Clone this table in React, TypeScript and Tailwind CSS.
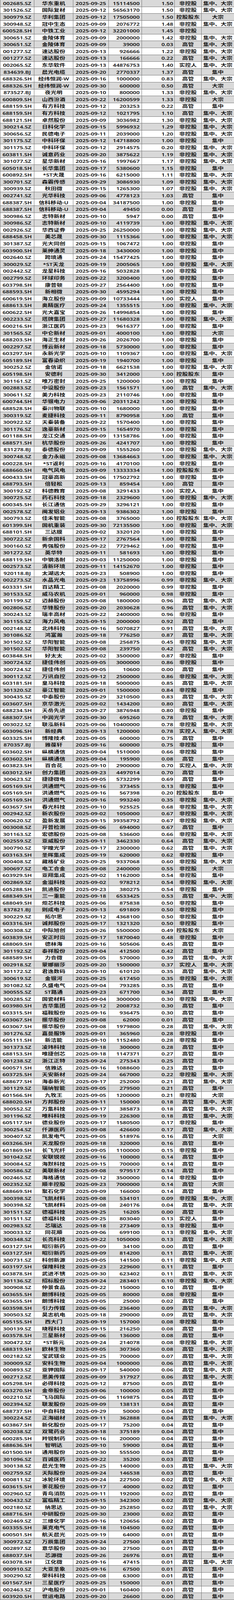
import React from "react";

// 减持明细表：代码 | 名称 | 日期 | 股数 | 比例 | 身份 | 方式
const RAW = `
002685.SZ 华东重机 25 15114500 1.50 非控股 集中、大宗
301526.SZ 国际复材 12 56563170 1.50 非控股 集中、大宗
300979.SZ 华利集团 12 17505000 1.50 控股股东 大宗
300948.SZ 冠中生态 09 2076772 1.48 非控股 集中、大宗
600528.SH 中铁工业 12 32201000 1.45 非控股 -
300651.SZ 金陵体育 09 2000000 1.42 非控股 集中、大宗
300651.SZ 金陵体育 09 39000 0.03 高管 集中、大宗
001277.SZ 速达股份 13 926666 1.22 非控股 集中、大宗
001277.SZ 速达股份 13 166666 0.22 高管 集中、大宗
002065.SZ 东华软件 13 44876753 1.40 实控人 集中、大宗
834639.BJ 晨光电缆 20 2770337 1.37 高管 集中
688326.SH 经纬恒润-W 16 1000000 0.83 高管 集中、大宗
688326.SH 经纬恒润-W 30 600000 0.50 高管 大宗
873527.BJ 夜光明 10 800000 1.33 非控股 集中、大宗
600809.SH 山西汾酒 22 16200599 1.33 非控股 大宗
688159.SH 有方科技 12 203253 0.22 高管 集中
688159.SH 有方科技 12 1021795 1.10 高管 集中、大宗
688121.SH 卓然股份 09 3036982 1.30 非控股 集中、大宗
300214.SZ 日科化学 15 5996932 1.29 非控股 集中、大宗
300656.SZ 民德电子 11 2039000 1.20 非控股 集中、大宗
301175.SZ 中科环保 12 14718800 1.00 非控股 集中
301175.SZ 中科环保 12 2914575 0.20 非控股 集中、大宗
603811.SH 诚意药业 20 3875622 1.19 非控股 集中、大宗
301077.SZ 星华新材 16 1997667 1.17 非控股 集中、大宗
605018.SH 长华集团 17 5380600 1.15 非控股 集中
600892.SH *ST大晟 16 6215000 1.11 非控股 集中、大宗
300701.SZ 森霸传感 29 3086930 1.09 非控股 集中、大宗
300939.SZ 秋田微 15 1265300 1.07 非控股 集中、大宗
002741.SZ 光华科技 06 4778123 1.03 高管 集中
688387.SH 信科移动-U 04 34187500 1.00 非控股 集中
688387.SH 信科移动-U 04 49450 0.00 高管 集中
300986.SZ 志特新材 10 5947 0.00 高管 集中
300986.SZ 志特新材 10 4119739 1.00 非控股 集中、大宗
002926.SZ 华西证券 25 26250000 1.00 非控股 集中、大宗
688458.SH 美芯晟 30 1115366 1.00 非控股 集中、大宗
301387.SZ 光大同创 15 1067472 1.00 非控股 集中
603900.SH 莱绅通灵 18 3430000 1.00 非控股 集中
002640.SZ 跨境通 24 15477425 1.00 非控股 集中
300029.SZ *ST天龙 19 2005065 1.00 非控股 集中、大宗
002442.SZ 龙星科技 16 5032828 1.00 非控股 集中
002799.SZ 环球印务 22 3200400 1.00 非控股 集中
603798.SH 康普顿 27 2564400 1.00 非控股 集中
688593.SH 新相微 30 4595294 1.00 非控股 集中
600619.SH 海立股份 09 10733444 1.00 实控人 集中
688613.SH 奥精医疗 24 1355515 1.00 非控股 集中、大宗
600622.SH 光大嘉宝 26 14996854 1.00 非控股 集中
002233.SZ 塔牌集团 27 11680328 1.00 非控股 集中、大宗
600216.SH 浙江医药 23 9616377 1.00 非控股 集中
301565.SZ 中仑新材 01 4000100 1.00 非控股 大宗
688203.SH 海正生材 26 2026700 1.00 非控股 集中
002297.SZ 博云新材 18 5730000 1.00 非控股 集中
603297.SH 永新光学 10 1109367 1.00 非控股 集中、大宗
605189.SH 富春染织 19 1940700 1.00 非控股 集中
300252.SZ 金信诺 18 6621538 1.00 非控股 集中、大宗
605198.SH 安德利 30 3412000 1.00 控股股东 集中
301161.SZ 唯万密封 25 1200000 1.00 非控股 集中
002883.SZ 中设股份 23 1561571 1.00 高管 集中、大宗
300611.SZ 美力科技 23 2110746 1.00 非控股 集中
600744.SH 华银电力 06 20311242 1.00 非控股 集中
688528.SH 秦川物联 10 1680000 1.00 非控股 集中
300319.SZ 麦捷科技 11 8790958 1.00 高管 集中
300922.SZ 天秦装备 22 1570400 1.00 非控股 集中
301176.SZ 逸豪新材 15 1654970 1.00 非控股 集中
601188.SH 龙江交通 09 13158786 1.00 非控股 集中
688571.SH 杭华股份 26 4241707 1.00 非控股 集中
831278.BJ 泰德股份 09 1555260 1.00 非控股 集中、大宗
300748.SZ 金力永磁 08 13684663 1.00 非控股 集中、大宗
600228.SH *ST返利 16 4170100 1.00 非控股 集中
688660.SH 电气风电 09 13333334 1.00 控股股东 集中
600433.SH 冠豪高新 06 17502792 1.00 非控股 集中
688793.SH 倍轻松 13 859454 1.00 高管 集中
300192.SZ 科德教育 08 3291433 1.00 实控人 集中
300725.SZ 药石科技 18 2329600 1.00 非控股 集中、大宗
600345.SH 长江通信 29 3296121 1.00 非控股 集中
002578.SZ 闽发铝业 13 9386302 1.00 非控股 集中
300793.SZ 佳禾智能 08 3765000 1.00 控股股东 集中、大宗
601399.SH 国机重装 30 72135500 1.00 非控股 集中、大宗
688101.SH 三达膜 02 3320120 1.00 非控股 集中
300722.SZ 新余国科 17 2767564 1.00 非控股 集中
300160.SZ 秀强股份 22 7729462 1.00 非控股 集中
301272.SZ 英华特 11 581693 1.00 非控股 集中
688119.SH 中钢洛耐 03 11250000 1.00 非控股 集中
002573.SZ 清新环境 11 14152670 1.00 非控股 集中
920118.BJ 太湖远大 23 508900 1.00 非控股 集中
002273.SZ 水晶光电 23 13758996 0.99 非控股 集中、大宗
603331.SH 百达精工 08 2020000 0.99 非控股 集中
301533.SZ 威马农机 01 960000 0.98 非控股 集中
301199.SZ 迈赫股份 08 1800000 0.96 高管 集中、大宗
002806.SZ 华锋股份 20 2030628 0.96 高管 集中、大宗
300243.SZ 瑞丰高材 22 2400000 0.96 非控股 集中
301155.SZ 海力风电 15 2000000 0.92 高管 集中
002148.SZ 北纬科技 16 5070827 0.91 高管 集中、大宗
301086.SZ 鸿富瀚 18 776250 0.87 高管 集中、大宗
301502.SZ 华阳智能 08 256875 0.45 非控股 集中、大宗
301502.SZ 华阳智能 08 239750 0.42 高管 集中、大宗
603848.SH 好太太 02 3500000 0.87 非控股 集中
300724.SZ 捷佳伟创 05 3000000 0.86 非控股 集中
300724.SZ 捷佳伟创 05 10600 0.00 高管 集中
300112.SZ 万讯自控 12 2500000 0.86 非控股 集中、大宗
603181.SH 皇马科技 18 5000000 0.85 高管 集中、大宗
301320.SZ 豪江智能 01 1500000 0.84 非控股 集中
300435.SZ 中泰股份 29 3210500 0.83 高管 集中、大宗
603607.SH 京华激光 02 1434200 0.80 高管 集中、大宗
688234.SH 天岳先进 27 3876948 0.80 非控股 集中
688307.SH 中润光学 30 695260 0.78 高管 集中、大宗
003022.SZ 联泓新科 06 10400000 0.78 非控股 集中、大宗
603096.SH 新经典 13 1200000 0.78 实控人 集中、大宗
603325.SH 博隆技术 05 600000 0.75 高管 集中
870357.BJ 雅葆轩 16 600000 0.75 非控股 集中
603602.SH 纵横通信 04 1510000 0.66 非控股 集中
603602.SH 纵横通信 04 195900 0.08 高管 集中
603823.SH 百合花 10 2900000 0.70 实控人 集中、大宗
603012.SH 创力集团 23 4497014 0.70 高管 集中
300623.SZ 捷捷微电 05 5732299 0.69 高管 集中
605169.SH 洪通燃气 16 373455 0.13 非控股 集中
605169.SH 洪通燃气 16 567398 0.20 控股股东 集中
605169.SH 洪通燃气 16 993240 0.35 非控股 集中、大宗
603657.SH 春光科技 10 925525 0.68 非控股 集中、大宗
002942.SZ 新农股份 02 1050000 0.67 非控股 集中、大宗
000620.SZ 盈新发展 15 39358792 0.67 非控股 集中、大宗
003008.SZ 开普检测 06 694000 0.67 高管 集中
301163.SZ 宏德股份 08 536600 0.66 非控股 集中、大宗
002559.SZ 亚威股份 11 3462330 0.64 高管 集中、大宗
300790.SZ 宇瞳光学 17 2300000 0.62 高管 集中、大宗
603163.SH 圣晖集成 19 620000 0.62 非控股 集中
000408.SZ 藏格矿业 25 9337068 0.60 非控股 集中、大宗
300697.SZ 电工合金 08 2400000 0.55 非控股 大宗
603929.SH 亚翔集成 02 1162000 0.54 非控股 集中
002869.SZ 金溢科技 02 978212 0.54 非控股 集中、大宗
605288.SH 凯迪股份 23 380275 0.54 非控股 集中
688349.SH 三一重能 18 6533425 0.53 高管 集中、大宗
688049.SH 炬芯科技 06 875838 0.50 非控股 集中
837821.BJ 则成电子 13 691809 0.50 非控股 集中
300229.SZ 拓尔思 12 4368100 0.50 非控股 集中
603316.SH 诚邦股份 17 1321320 0.50 非控股 集中
300308.SZ 中际旭创 26 5500000 0.49 控股股东 大宗
603839.SH 安正时尚 17 1870040 0.48 非控股 集中
688069.SH 德林海 16 505606 0.45 高管 集中
301192.SZ 泰祥股份 04 412500 0.42 高管 集中
688589.SH 力合微 05 570000 0.39 高管 集中、大宗
002918.SZ 蒙娜丽莎 20 1500000 0.37 实控人 集中、大宗
301172.SZ 君逸数码 10 610120 0.35 高管 集中、大宗
300619.SZ 金银河 25 617450 0.35 非控股 集中、大宗
301082.SZ 久盛电气 04 793285 0.35 高管 集中
300555.SZ ST路通 23 671700 0.34 高管 集中
300285.SZ 国瓷材料 04 3000000 0.30 非控股 集中、大宗
603980.SH 吉华集团 12 2008732 0.30 高管 集中
603315.SH 福鞍股份 16 936475 0.30 高管 集中
603067.SH 振华股份 08 62000 0.01 高管 集中
603067.SH 振华股份 08 1979800 0.28 高管 集中、大宗
301276.SZ 嘉曼服饰 01 365960 0.28 非控股 集中
605111.SH 新洁能 10 1152480 0.28 非控股 集中
301373.SZ 凌玮科技 18 300000 0.28 高管 集中
688153.SH 唯捷创芯 18 1147371 0.27 高管 集中
001238.SZ 浙江正特 24 275343 0.25 高管 集中
600571.SH 信雅达 16 1088600 0.23 高管 集中
603725.SH 天安新材 24 667000 0.22 非控股 集中、大宗
688677.SH 海泰新光 17 252000 0.21 高管 集中、大宗
301129.SZ 瑞纳智能 05 279500 0.21 高管 集中
601566.SH 九牧王 05 1200000 0.21 非控股 大宗
688020.SH 方邦股份 11 150000 0.18 高管 集中、大宗
300552.SZ 万集科技 17 385873 0.18 高管 集中、大宗
301196.SZ 唯科科技 19 226300 0.18 高管 集中、大宗
605117.SH 德业股份 17 1580500 0.17 非控股 集中
300254.SZ 仟源医药 08 426600 0.17 高管 集中、大宗
300407.SZ 凯发电气 05 518976 0.16 高管 大宗
603266.SH 天龙股份 18 320000 0.16 高管 集中
601869.SH 长飞光纤 05 1100000 0.15 非控股 集中
301042.SZ 安联锐视 16 100000 0.14 高管 集中
300084.SZ 海默科技 15 700000 0.14 高管 集中
300586.SZ 美联新材 08 979517 0.14 高管 集中
002465.SZ 海格通信 12 3500000 0.14 非控股 集中
002352.SZ 顺丰控股 23 7000000 0.14 高管 大宗
688669.SH 聚石化学 09 166000 0.14 高管 集中
300398.SZ 飞凯材料 08 534101 0.09 非控股 集中、大宗
300398.SZ 飞凯材料 08 240176 0.04 高管 集中、大宗
301511.SZ 德福科技 25 16205 0.00 高管 集中
301511.SZ 德福科技 25 803040 0.13 实控人 集中
002983.SZ 芯瑞达 18 273409 0.13 非控股 集中
300033.SZ 同花顺 06 699100 0.13 非控股 集中、大宗
300348.SZ 长亮科技 22 1050000 0.13 高管 集中、大宗
603127.SH 昭衍新药 09 34100 0.00 高管 集中
603127.SH 昭衍新药 09 814200 0.11 高管 集中、大宗
300731.SZ 科创新源 05 141500 0.11 非控股 集中、大宗
603197.SH 保隆科技 23 229600 0.11 高管 集中
603878.SH 武进不锈 30 623402 0.11 高管 集中、大宗
301136.SZ 招标股份 24 283401 0.10 非控股 集中、大宗
300908.SZ 仲景食品 22 150000 0.10 高管 集中
603655.SH 朗博科技 05 80000 0.08 非控股 集中
603655.SH 朗博科技 05 25000 0.02 高管 集中
603598.SH 引力传媒 06 236400 0.09 高管 集中、大宗
300503.SZ 昊志机电 18 290000 0.09 高管 集中、大宗
605155.SH 西大门 19 157000 0.08 非控股 集中
300139.SZ 晓程科技 15 216250 0.08 高管 集中
603578.SH 三星新材 06 136000 0.08 高管 集中
300472.SZ *ST新元 24 214078 0.08 非控股 集中、大宗
688319.SH 欧林生物 05 307360 0.08 高管 集中、大宗
002182.SZ 宝武镁业 25 700000 0.07 高管 集中、大宗
300009.SZ 安科生物 04 1000000 0.06 高管 集中、大宗
000893.SZ 亚钾国际 17 540000 0.06 高管 集中、大宗
002712.SZ 思美传媒 09 317927 0.06 高管 集中、大宗
605298.SH 必得科技 12 87500 0.05 高管 集中
603270.SH 金帝股份 06 100000 0.05 高管 集中
002210.SZ 飞马国际 06 1169875 0.04 高管 集中
002394.SZ 联发股份 09 138131 0.04 高管 集中
688737.SH 中自科技 29 50000 0.04 高管 集中
300224.SZ 正海磁材 11 362888 0.04 高管 集中、大宗
603867.SH 新化股份 17 75200 0.04 高管 集中
002038.SZ 双鹭药业 18 375189 0.04 高管 集中
600285.SH 羚锐制药 16 200000 0.04 高管 集中
688636.SH 智明达 10 59000 0.04 高管 集中
601500.SH 通用股份 30 555500 0.04 高管 集中
301096.SZ 百诚医药 22 35200 0.03 高管 集中
300138.SZ 晨光生物 25 140000 0.03 高管 集中、大宗
002759.SZ 天际股份 24 146538 0.03 高管 集中
000811.SZ 冰轮环境 24 227500 0.02 高管 集中、大宗
603615.SH 茶花股份 17 40000 0.02 高管 集中
002960.SZ 青鸟消防 11 192000 0.02 高管 集中
300432.SZ 富临精工 15 342300 0.02 高管 集中、大宗
002180.SZ 纳思达 30 252850 0.02 高管 集中、大宗
688716.SH 中研股份 30 23000 0.02 高管 集中
002469.SZ 三维化学 16 120656 0.02 高管 集中
603355.SH 莱克电气 18 104500 0.02 高管 集中
600501.SH 航天晨光 19 64000 0.01 高管 集中
300972.SZ 万辰集团 24 27500 0.01 高管 集中
002897.SZ 意华股份 30 27500 0.01 高管 集中
688037.SH 芯源微 26 26976 0.01 高管 集中
603078.SH 江化微 16 47415 0.01 高管 集中、大宗
000910.SZ 大亚圣象 16 67500 0.01 高管 集中
300290.SZ 荣科科技 08 63000 0.01 高管 集中
601567.SH 三星医疗 25 150000 0.01 高管 集中
002463.SZ 沪电股份 01 160400 0.01 高管 集中
603920.SH 世运电路 20 26600 0.00 高管 集中
`;

const rows = RAW.trim()
  .split("\n")
  .map((line) => line.trim().split(/\s+/));

// 表格按视口高度铺满；视口比设计稿矮时，把字形按同样比例压扁，截图拉伸后字形正常
const DESIGN_H = 5523;
const squash =
  typeof window === "undefined" ? 1 : Math.min(1, window.innerHeight / DESIGN_H);
const glyph = { transform: `scaleY(${squash})` };

const Cell = ({ children, className }: { children: React.ReactNode; className: string }) => (
  <div className={"flex min-w-0 items-center overflow-hidden whitespace-nowrap " + className}>
    <span className="inline-block" style={glyph}>
      {children}
    </span>
  </div>
);

const line = "border-r border-[#777]";

export default function App() {
  return (
    <div className="grid h-screen w-[600px] grid-rows-[repeat(233,minmax(0,1fr))] overflow-hidden bg-white text-[15px] leading-none font-semibold text-[#111] [font-family:Noto_Sans,Noto_Sans_CJK_SC,sans-serif]">
      {rows.map(([code, name, day, shares, ratio, holder, method], i) => (
        <div
          key={i}
          className={
            "grid min-h-0 grid-cols-[88px_100px_91px_85px_84px_69px_83px] overflow-hidden border-b border-[#777] " +
            (i % 2 === 0 ? "bg-[#d9d9d9]" : "bg-white")
          }
        >
          <Cell className={line + " justify-center border-l"}>{code}</Cell>
          <Cell className={line + " justify-center"}>{name}</Cell>
          <Cell className={line + " justify-center"}>2025-09-{day}</Cell>
          <Cell className={line + " justify-end pr-[5px]"}>{shares}</Cell>
          <Cell className={line + " justify-end pr-[3px]"}>{ratio}</Cell>
          <Cell className={line + " justify-center"}>{holder}</Cell>
          <Cell className="justify-center">{method === "-" ? "" : method}</Cell>
        </div>
      ))}
    </div>
  );
}
